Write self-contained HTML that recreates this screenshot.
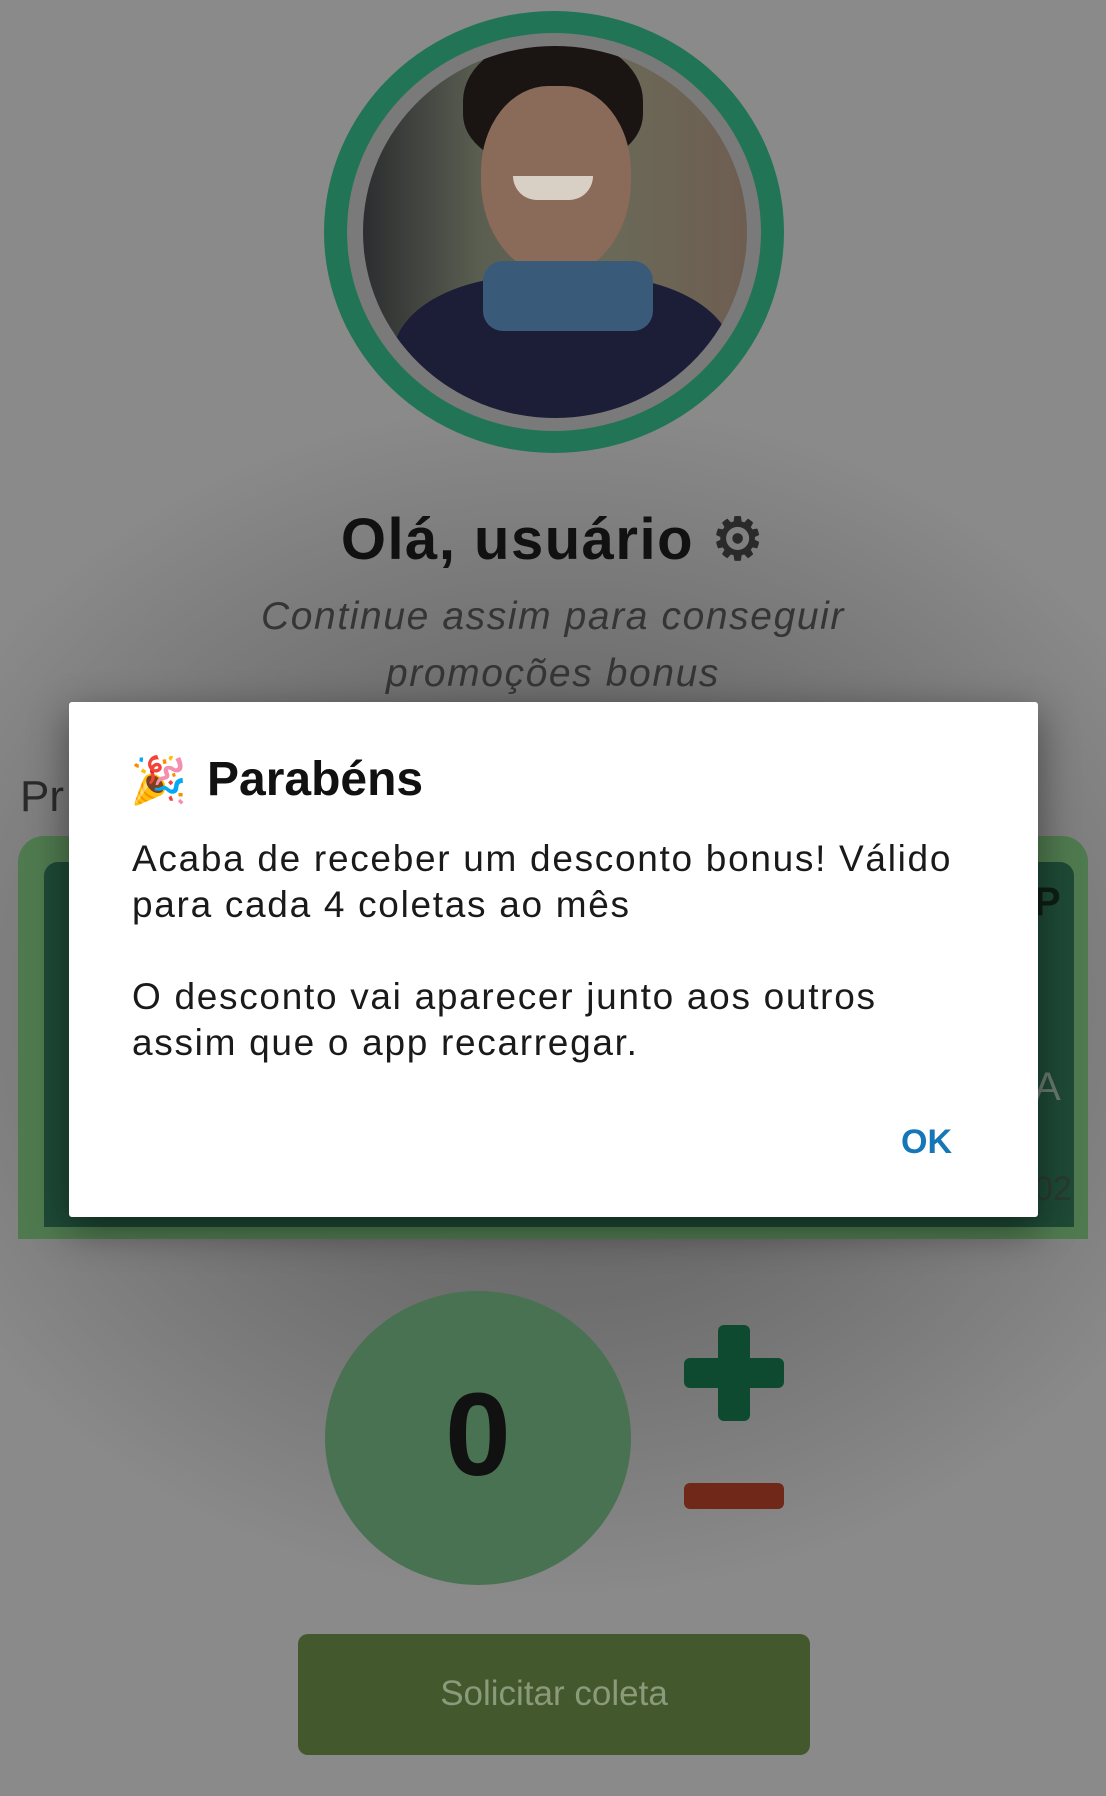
<!DOCTYPE html>
<html><head><meta charset="utf-8"><style>
*{margin:0;padding:0;box-sizing:border-box}
body{width:1106px;height:1796px;position:relative;overflow:hidden;background:#858585;font-family:"Liberation Sans",sans-serif}
.a{position:absolute}
</style></head><body>
<div class="a" style="left:0;top:0;width:1106px;height:1796px;background:radial-gradient(ellipse 700px 600px at 553px 1000px,#5e5e5e 0%,#6e6e6e 50%,#8a8a8a 100%)"></div>
<div class="a" style="left:324px;top:11px;width:460px;height:442px;border-radius:50%;background:#217456"></div>
<div class="a" style="left:347px;top:33px;width:414px;height:398px;border-radius:50%;background:#7a7a7a"></div>
<div class="a" style="left:363px;top:46px;width:384px;height:372px;border-radius:50%;overflow:hidden;background:linear-gradient(90deg,#2c2d30 0%,#5a5e50 30%,#6a6a58 60%,#6e5e52 100%)">
 <div class="a" style="left:100px;top:-10px;width:180px;height:130px;border-radius:50% 50% 40% 40%;background:#1a1412"></div>
 <div class="a" style="left:118px;top:40px;width:150px;height:190px;border-radius:45% 45% 50% 50%;background:#8a6a58"></div>
 <div class="a" style="left:150px;top:130px;width:80px;height:24px;border-radius:0 0 40px 40px;background:#d8d0c4"></div>
 <div class="a" style="left:30px;top:230px;width:340px;height:200px;border-radius:40% 40% 0 0;background:#1c1e38"></div>
 <div class="a" style="left:120px;top:215px;width:170px;height:70px;background:#3a5a7a;border-radius:20px"></div>
</div>
<div class="a" style="left:0;top:505px;width:1106px;text-align:center;font-size:58px;font-weight:bold;color:#111;letter-spacing:1.5px">Olá, usuário <span style="color:#2a2a2a">⚙</span></div>
<div class="a" style="left:0;top:588px;width:1106px;text-align:center;font-size:39px;font-style:italic;color:#353535;line-height:57px;letter-spacing:1.6px">Continue assim para conseguir<br>promoções bonus</div>
<div class="a" style="left:20px;top:772px;font-size:44px;color:#2a2a2a">Pr</div>
<div class="a" style="left:18px;top:836px;width:1070px;height:403px;border-radius:26px 26px 0 0;background:#4f7a4f"></div>
<div class="a" style="left:44px;top:862px;width:1030px;height:365px;background:#1e4a36;border-radius:14px 14px 0 0"></div>
<div class="a" style="left:1034px;top:880px;font-size:40px;font-weight:bold;color:#0e1e16">P</div>
<div class="a" style="left:1034px;top:1065px;font-size:40px;color:#6a7a70">A</div>
<div class="a" style="left:1034px;top:1170px;font-size:34px;color:#2a3a30">02</div>
<div class="a" style="left:69px;top:702px;width:969px;height:515px;background:#fff;border-radius:3px;box-shadow:0 12px 40px rgba(0,0,0,.45)"></div>
<div class="a" style="left:130px;top:750px;font-size:46px;line-height:60px">🎉</div>
<div class="a" style="left:207px;top:752px;font-size:48px;font-weight:bold;color:#111">Parabéns</div>
<div class="a" style="left:132px;top:836px;font-size:37px;line-height:46px;color:#1a1a1a;width:900px;letter-spacing:1.7px">Acaba de receber um desconto bonus! Válido<br>para cada 4 coletas ao mês<br><br>O desconto vai aparecer junto aos outros<br>assim que o app recarregar.</div>
<div class="a" style="left:901px;top:1123px;font-size:34px;font-weight:bold;color:#1677b8">OK</div>
<div class="a" style="left:325px;top:1291px;width:306px;height:294px;border-radius:50%;background:#487252"></div>
<div class="a" style="left:325px;top:1365px;width:306px;text-align:center;font-size:118px;font-weight:bold;color:#111;line-height:140px">0</div>
<div class="a" style="left:718px;top:1325px;width:32px;height:96px;border-radius:6px;background:#0e4a30"></div>
<div class="a" style="left:684px;top:1358px;width:100px;height:30px;border-radius:6px;background:#0e4a30"></div>
<div class="a" style="left:684px;top:1483px;width:100px;height:26px;border-radius:6px;background:#702818"></div>
<div class="a" style="left:298px;top:1634px;width:512px;height:121px;border-radius:10px;background:#44582d"></div>
<div class="a" style="left:298px;top:1674px;width:512px;text-align:center;font-size:35px;color:#8a9a7a">Solicitar coleta</div>
</body></html>
